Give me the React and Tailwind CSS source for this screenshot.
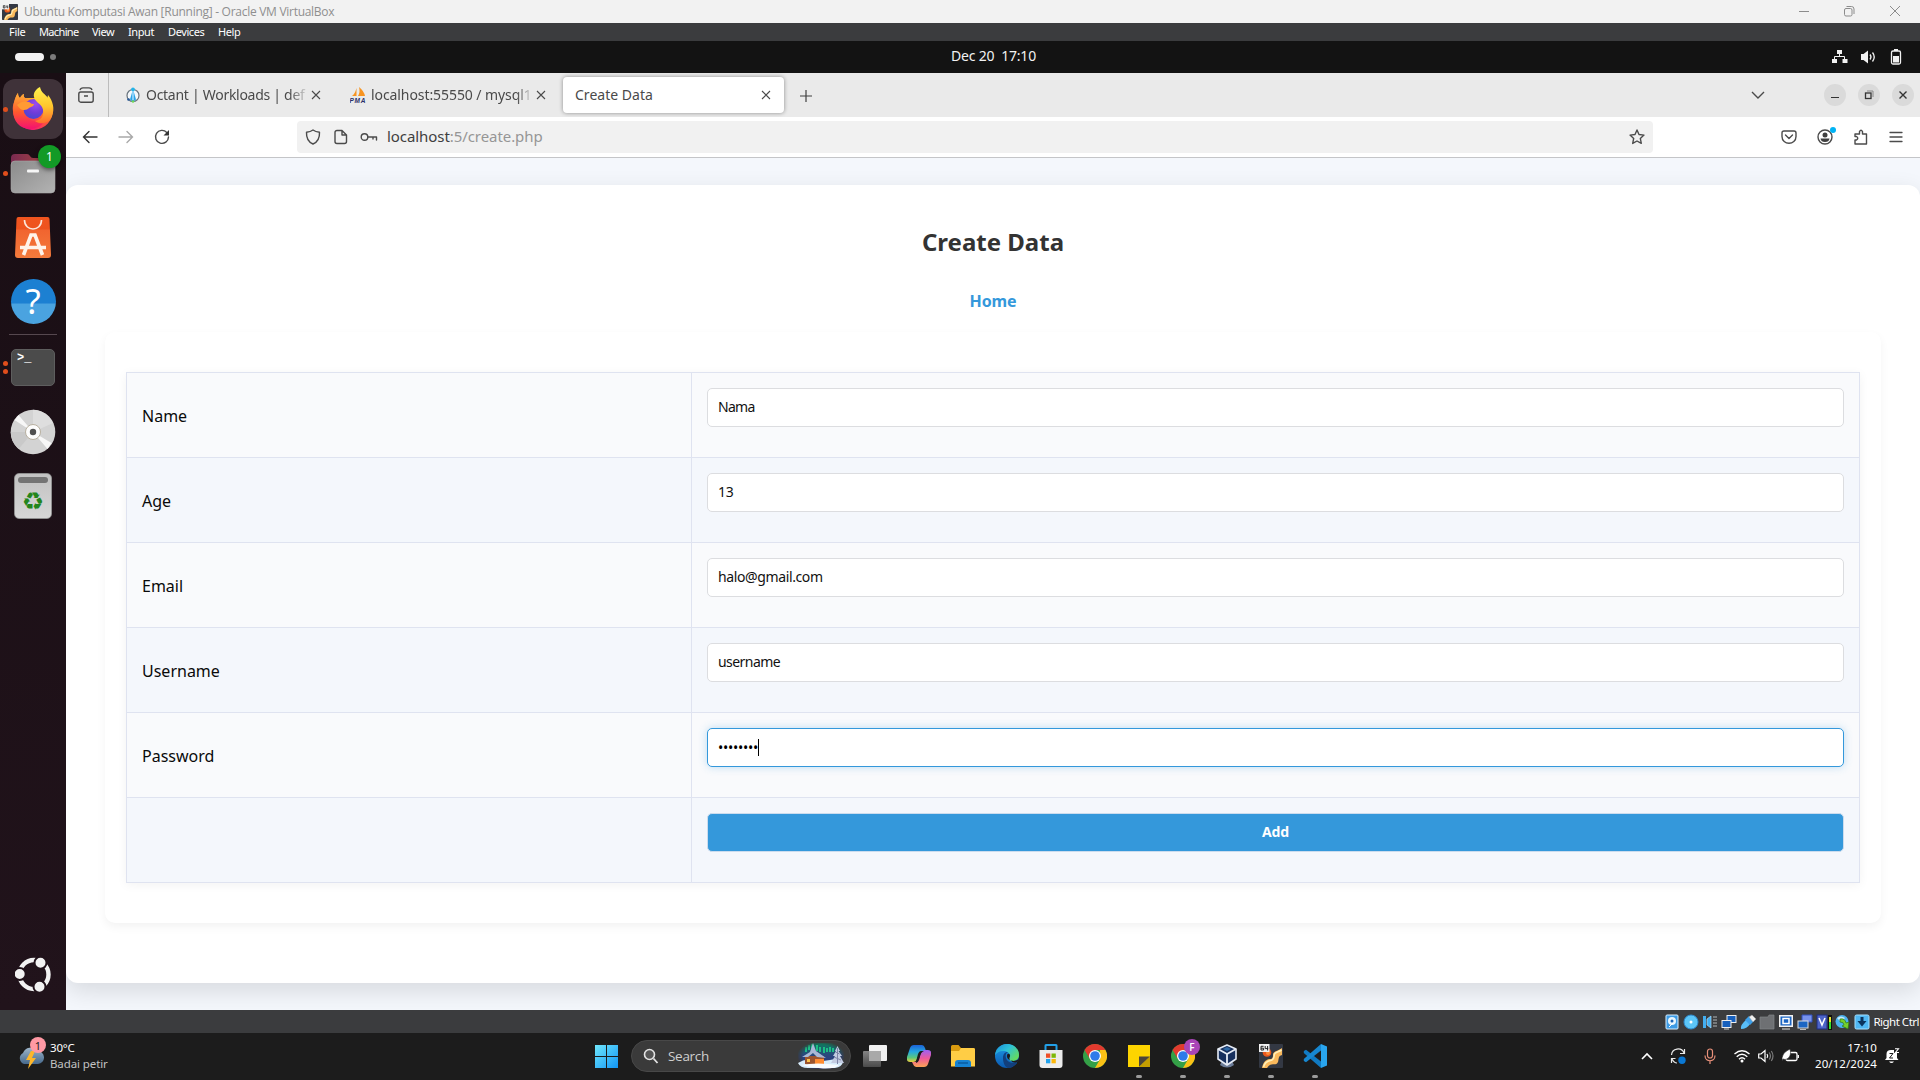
import React from "react";

const rows = [
  { label: "Name", value: "Nama", spacing: "tracking-[-0.7px]" },
  { label: "Age", value: "13", spacing: "tracking-[-0.3px]" },
  { label: "Email", value: "halo@gmail.com", spacing: "tracking-[-0.38px]" },
  { label: "Username", value: "username", spacing: "tracking-[-0.55px]" },
];

function Svg({ w = 16, h, box, children, className = "", ...rest }) {
  const hh = h || w;
  return (
    <svg width={w} height={hh} viewBox={box || `0 0 ${w} ${hh}`} fill="none" className={`block shrink-0 ${className}`} {...rest}>
      {children}
    </svg>
  );
}

function C64({ size = 24 }) {
  return (
    <Svg w={size} box="0 0 24 24">
      <rect width="24" height="24" rx="1" fill="#333843" />
      <path d="M3 24c1-5 3-8 7-9 4 0 4-1 4-5 1-3 5-3 9-6v7c-4 1-3 4-4 7-2 4-5 1-8 3-2 1-2 2-3 3z" fill="#f9b95c" />
      <path d="M4.500 23c1-4 4-6 7-6.500 4-.5 3-3 4-6.500 1-2 4-2 7-4" stroke="#fff0b8" strokeWidth="1.600" />
      <circle cx="8" cy="8.500" r="4.300" fill="#e9581d" />
      <circle cx="9" cy="9" r="2" fill="#ff8d3a" />
      <rect width="10.500" height="8" fill="#f1f1f1" />
      <path d="M4.600 2.300H2v3.700h2.600V4.200H2M6.200 2v2.600h3M8.600 2v4.500" stroke="#222" strokeWidth="1" />
    </Svg>
  );
}

function TitleBar() {
  return (
    <header className="flex h-[23px] items-center bg-[#f2f2f2] pl-[2px]">
      <C64 size={16} />
      <span className="ml-[6px] whitespace-pre font-['Open_Sans'] text-[12px] leading-[23px] tracking-[-0.28px] text-[#8f8f8f]">
        Ubuntu Komputasi Awan [Running] - Oracle VM VirtualBox
      </span>
      <div className="ml-auto flex items-center pb-[2px] pr-[19px] text-[#8c8c8c]">
        <Svg w={12}><path d="M1 6.500h10" stroke="currentColor" /></Svg>
        <Svg w={12} className="ml-[33px]">
          <rect x="1.500" y="3.500" width="7.500" height="7.500" rx="1.500" stroke="currentColor" />
          <path d="M3.500 1.500h5a2.500 2.500 0 0 1 2.500 2.500v5" stroke="currentColor" />
        </Svg>
        <Svg w={12} className="ml-[34px]"><path d="M1 1l10 10M11 1L1 11" stroke="currentColor" /></Svg>
      </div>
    </header>
  );
}

function MenuBar() {
  return (
    <nav className="flex h-[18px] items-center bg-[#3b3c3e] pl-[9px] font-['Noto_Sans'] text-[11px] leading-[18px] text-white">
      <span className="w-[30px] tracking-[-0.3px]">File</span>
      <span className="w-[53px] tracking-[-0.65px]">Machine</span>
      <span className="w-[36px] tracking-[-0.5px]">View</span>
      <span className="w-[40px] tracking-[-0.4px]">Input</span>
      <span className="w-[50px] tracking-[-0.4px]">Devices</span>
      <span className="tracking-[-0.4px]">Help</span>
    </nav>
  );
}

function GnomeBar() {
  return (
    <div className="grid h-[32px] grid-cols-3 items-center bg-[#131313] text-[#f2f2f2]">
      <div className="flex items-center gap-[6px] pl-[15px]">
        <span className="h-[8px] w-[29px] rounded-full bg-[#f2f2f2]" />
        <span className="size-[6px] rounded-full bg-[#7c7c7c]" />
      </div>
      <div className="whitespace-pre pb-[2px] pl-[67px] text-center font-['Noto_Sans'] text-[14px] leading-[30px] tracking-[-0.2px]">
        <span>Dec 20  17:10</span>
      </div>
      <div className="flex items-center justify-end gap-[13px] pr-[18px]">
        <Svg w={16}>
          <path d="M5 1h5v4H5zM0 10h5v4H0zM10.500 10h5v4h-5z" fill="currentColor" />
          <path d="M7.500 5v3M2.500 10V7.500h10V10" stroke="currentColor" />
        </Svg>
        <Svg w={16}>
          <path d="M0 5h2.500L7 1.500v13L2.500 11H0z" fill="currentColor" />
          <path d="M9 5.500q2 2.500 0 5M11.500 3.500q3.500 4.500 0 9" stroke="currentColor" strokeWidth="1.300" />
        </Svg>
        <Svg w={12} h={16}>
          <path d="M4 0h4v2H4z" fill="currentColor" />
          <rect x="1.500" y="2" width="9" height="13" rx="1.500" stroke="currentColor" strokeWidth="1.300" />
          <path d="M3 7h6v6.500H3z" fill="currentColor" />
        </Svg>
      </div>
    </div>
  );
}

function FirefoxLogo() {
  return (
    <Svg w={44} box="0 0 44 44">
      <defs>
        <linearGradient id="ffBody" x1="34" y1="4" x2="12" y2="42" gradientUnits="userSpaceOnUse">
          <stop stopColor="#fff44f" /><stop offset=".3" stopColor="#ffb52a" /><stop offset=".6" stopColor="#ff5a36" /><stop offset="1" stopColor="#f0107c" />
        </linearGradient>
        <linearGradient id="ffLeft" x1="0" y1="10" x2="0" y2="42" gradientUnits="userSpaceOnUse">
          <stop stopColor="#ffa436" /><stop offset=".5" stopColor="#ff5a2d" /><stop offset="1" stopColor="#f5156c" />
        </linearGradient>
        <linearGradient id="ffTail" x1="30" y1="0" x2="32" y2="38" gradientUnits="userSpaceOnUse">
          <stop stopColor="#fff44f" /><stop offset=".55" stopColor="#ffc52c" /><stop offset="1" stopColor="#ff6a2c" />
        </linearGradient>
        <radialGradient id="ffGlobe" cx=".6" cy=".25" r=".9">
          <stop stopColor="#9b4cf0" /><stop offset=".5" stopColor="#6f3cd8" /><stop offset="1" stopColor="#3a4bd0" />
        </radialGradient>
      </defs>
      <path d="M4 13c1-3 2-5 3-6 0 3 1 4 2 5 1-2 3-4 4-4-1 2 0 3 1 4h10l4-9c3 5 13 8 14 20a20 20 0 1 1-40 2c-1-5 1-8 2-12z" fill="url(#ffBody)" />
      <path d="M4 13c1-3 2-5 3-6 0 3 1 4 2 5 1-2 3-4 4-4-1 3 1 5 5 6l-3 14c2 8 14 10 20 4-2 7-9 11-16 11C6 43-2 30 4 13z" fill="url(#ffLeft)" />
      <circle cx="22.500" cy="23" r="10" fill="url(#ffGlobe)" />
      <path d="M29 1c1 5 5 8 8 12-1-2 0-3 0-4 5 6 7 14 4 21-3 8-12 9-17 5 8-1 10-8 7-14-2-4-7-5-8-10-1-4 2-8 6-10z" fill="url(#ffTail)" />
      <path d="M6 19c4-4 8-4 12-3 2 1 2 2 5 2 0 2-3 3-5 4-1 1-3 2-5 2-3 0-4-1-7-5z" fill="#ff9a33" />
    </Svg>
  );
}

function DockItem({ dots = 0, className = "", children }) {
  return (
    <div className={`relative flex w-full shrink-0 items-center justify-center ${className}`}>
      {dots > 0 && (
        <span className="absolute left-[3px] z-10 flex flex-col gap-[3px]">
          {Array.from({ length: dots }, (_, i) => (
            <i key={i} className="size-[5px] rounded-full bg-[#e04e1c]" />
          ))}
        </span>
      )}
      {children}
    </div>
  );
}

function Dock() {
  return (
    <aside className="flex w-[66px] shrink-0 flex-col bg-linear-to-b from-[#190e14] to-[#21131b] pt-[6px]">
      <DockItem dots={1} className="h-[60px]">
        <span className="flex size-[60px] items-center justify-center rounded-[12px] bg-[#3f3239] pb-[2px]">
          <FirefoxLogo />
        </span>
      </DockItem>

      <DockItem dots={1} className="mt-[4px] h-[60px]">
        <Svg w={46} h={42}>
          <defs>
            <linearGradient id="folderFront" x1="0" y1="0" x2="1" y2="1"><stop stopColor="#8b8b8b" /><stop offset="1" stopColor="#b3b3b3" /></linearGradient>
            <linearGradient id="folderBack" x1="0" y1="0" x2="1" y2="0"><stop stopColor="#7a2a50" /><stop offset="1" stopColor="#b04a3e" /></linearGradient>
          </defs>
          <path d="M1 6a4 4 0 0 1 4-4h12q2 0 3 2t3 2h22v14H1z" fill="url(#folderBack)" />
          <rect x="1" y="9" width="44" height="32" rx="4" fill="url(#folderFront)" stroke="#a9a9a9" strokeWidth=".6" />
          <rect x="17" y="17.500" width="12" height="3" rx="1" fill="#f6f6f6" />
        </Svg>
        <span className="absolute left-[38px] top-[2px] flex size-[23px] items-center justify-center rounded-full bg-[#129a26] font-['Noto_Sans'] text-[12px] leading-none text-white shadow-[0_2px_4px_rgba(0,0,0,0.5)]">1</span>
      </DockItem>

      <DockItem className="mt-[4px] h-[60px]">
        <Svg w={38} h={43}>
          <defs><linearGradient id="bag" x1="0" y1="0" x2="0" y2="1"><stop stopColor="#f0551f" /><stop offset=".3" stopColor="#ee531e" /><stop offset=".31" stopColor="#f1642f" /><stop offset="1" stopColor="#f47b3c" /></linearGradient></defs>
          <path d="M4.500 1h29q2 0 2 2l1.500 36q0 3-3 3H4q-3 0-3-3L2.500 3q0-2 2-2z" fill="url(#bag)" />
          <path d="M10.500 4c0 12 17 12 17 0" stroke="#fbe7dc" strokeWidth="1.600" />
          <path d="M9.500 39l7.500-20h4l7.500 20M6 31.500h26" stroke="#fff3ea" strokeWidth="3.600" />
        </Svg>
      </DockItem>

      <DockItem className="mt-[4px] h-[60px]">
        <span className="flex size-[45px] items-center justify-center rounded-full bg-linear-to-b from-[#1c80d2] from-54% to-[#4aa3e0] to-55%">
          <span className="font-['Noto_Sans'] text-[35px] leading-[44px] text-white">?</span>
        </span>
      </DockItem>

      <div className="mx-[9px] mt-[3px] h-px shrink-0 bg-[#56484f]" />

      <DockItem dots={2} className="mt-[2px] h-[60px]">
        <span className="h-[37px] w-[44px] rounded-[5px] border border-[#5e5e5e] bg-[#4b4b4b] pl-[5px] font-['Liberation_Mono'] text-[12px] font-bold leading-[17px] text-white">&gt;_</span>
      </DockItem>

      <DockItem className="mt-[5px] h-[60px]">
        <Svg w={46}>
          <circle cx="23" cy="23" r="22.300" fill="#d3d3d3" />
          <path d="M23 23V.700A22.300 22.300 0 0 1 43 14z" fill="#dedede" />
          <path d="M23 23H.700a22.300 22.300 0 0 0 8 17z" fill="#c9c9c9" />
          <path d="M23 23L4.500 11l4-5zM23 23l18.500 11-4 6z" fill="#f7f7f7" />
          <circle cx="23" cy="23" r="7.500" fill="#fdfdfd" stroke="#b8b0a0" />
          <circle cx="23" cy="23" r="3.200" fill="#505050" />
        </Svg>
      </DockItem>

      <DockItem className="mt-[4px] h-[60px]">
        <span className="flex h-[46px] w-[38px] flex-col items-center rounded-[5px] border border-[#8f8f8f] bg-linear-to-b from-[#c2c2c2] to-[#d6d6d6] pt-[3px]">
          <i className="h-[6px] w-[30px] rounded-[3px] bg-[#747474]" />
          <span className="mt-[8px] font-['DejaVu_Sans'] text-[25px] leading-[22px] text-[#23851c]">♻</span>
        </span>
      </DockItem>

      <DockItem className="mb-[18px] mt-auto h-[36px]">
        <Svg w={36}>
          <circle cx="19" cy="18.500" r="14.500" stroke="#f2f2f2" strokeWidth="4.400" />
          {[[4.700, 18], [25.500, 6.800], [24.500, 30.800]].map(([x, y]) => (
            <circle key={x} cx={x} cy={y} r="6" fill="#f2f2f2" stroke="#20121a" strokeWidth="2" />
          ))}
        </Svg>
      </DockItem>
    </aside>
  );
}

function TabClose({ className = "" }) {
  return <Svg w={10} className={className}><path d="M1 1l8 8M9 1L1 9" stroke="#4a4a4a" strokeWidth="1.100" /></Svg>;
}

function WindowButton({ children, className = "" }) {
  return <span className={`flex size-[22px] items-center justify-center rounded-full bg-[#dadada] ${className}`}>{children}</span>;
}

function TabStrip() {
  return (
    <div className="flex h-[44px] items-center bg-[#eaeaea] pr-[6px] font-['Noto_Sans'] text-[14px] text-[#4a4a4a]">
      <div className="flex h-full w-[43px] items-center border-r border-[#bcbcbc] pl-[12px]">
        <Svg w={16}>
          <rect x=".8" y="5" width="14.400" height="10.200" rx="2" stroke="#4a4a4a" strokeWidth="1.400" />
          <path d="M2 3Q2.500.800 5 .800h6Q13.500.800 14 3M6 9h4" stroke="#4a4a4a" strokeWidth="1.300" />
        </Svg>
      </div>
      <div className="flex w-[225px] items-center pl-[16px]">
        <Svg w={16}>
          <circle cx="8" cy="8.500" r="6" fill="#f4f8fb" stroke="#68737d" strokeWidth="1.200" />
          <path d="M8 2L5 12.500 8 15l3-2.500z" fill="#2aa4e8" />
          <path d="M7.300 4h1.400v9H7.300z" fill="#b4e3ff" />
          <circle cx="8" cy="2.300" r="1.900" fill="#24b4e8" />
          <circle cx="8" cy="14.500" r="1.300" fill="#70d858" />
          <circle cx="3.500" cy="12.500" r="1.300" fill="#255a9c" />
        </Svg>
        <span className="ml-[5px] w-[163px] overflow-hidden whitespace-nowrap pb-[2px] tracking-[-0.28px] mask-r-from-88%">Octant | Workloads | def</span>
        <TabClose className="ml-[2px]" />
      </div>
      <div className="flex w-[229px] items-center pl-[16px]">
        <Svg w={16}>
          <path d="M6.500 1v8H2Q5 7 6.500 1zM9 0q5 4 6 9H8Q10.500 5 9 0z" fill="#f79421" />
          <text x="-.5" y="15.500" fontFamily="Liberation Sans" fontSize="6.500" fontWeight="bold" fontStyle="italic" textLength="16" fill="#2a3068">PMA</text>
        </Svg>
        <span className="ml-[5px] w-[162px] overflow-hidden whitespace-nowrap pb-[2px] tracking-[-0.08px] mask-r-from-90%">localhost:55550 / mysql1</span>
        <TabClose className="ml-[3px]" />
      </div>
      <div className="flex h-[36px] w-[221px] items-center justify-between rounded-[4px] bg-white pl-[12px] pr-[13px] shadow-[0_0_4px_rgba(0,0,0,0.4)]">
        <span className="pb-[2px] tracking-[0.02px]">Create Data</span>
        <TabClose />
      </div>
      <Svg w={12} className="ml-[16px] mt-px"><path d="M6 0v12M0 6h12" stroke="#3f3f3f" strokeWidth="1.200" /></Svg>
      <Svg w={14} h={10} className="ml-auto"><path d="M1 2l6 6 6-6" stroke="#4a4a4a" strokeWidth="1.400" /></Svg>
      <WindowButton className="ml-[59px]"><Svg w={8}><path d="M0 6.500h8" stroke="#333" /></Svg></WindowButton>
      <WindowButton className="ml-[12px]">
        <Svg w={10}><rect x="1.500" y="3" width="5.500" height="5.500" stroke="#333" strokeWidth="1.300" /><path d="M3 1h6v6" stroke="#888" /></Svg>
      </WindowButton>
      <WindowButton className="ml-[12px]"><Svg w={8}><path d="M.500.500l7 7M7.500.500l-7 7" stroke="#333" strokeWidth="1.400" /></Svg></WindowButton>
    </div>
  );
}

function NavBar() {
  const s = { stroke: "#4b4b4b", strokeWidth: 1.4, strokeLinejoin: "round", strokeLinecap: "round" };
  return (
    <div className="flex h-[41px] items-center border-b border-[#c4c5c8] bg-white pl-[16px] pr-[17px]">
      <Svg w={16}><path d="M15 8H1.500M7 2.500L1.500 8 7 13.500" stroke="#333" strokeWidth="1.400" strokeLinecap="round" /></Svg>
      <Svg w={16} className="ml-[20px]"><path d="M1 8h13.500M9 2.500L14.500 8 9 13.500" stroke="#a9a9a9" strokeWidth="1.400" strokeLinecap="round" /></Svg>
      <Svg w={16} className="ml-[20px]"><path d="M12.800 3.500A6.500 6.500 0 1 0 14.500 8" {...s} /><path d="M15 1v5.500H9.500z" fill="#333" /></Svg>
      <div className="ml-[127px] flex h-[32px] w-[1356px] items-center rounded-[4px] bg-[#f1f1f1] px-[8px]">
        <Svg w={16}><path d="M8 1C6 2.500 4 3 1.500 3.200 1.200 9 3.500 13 8 15c4.500-2 6.800-6 6.500-11.800C12 3 10 2.500 8 1z" {...s} /></Svg>
        <Svg w={16} className="ml-[12px]"><path d="M4 1.500h5l4.500 4.500v6.500a2 2 0 0 1-2 2H4a2 2 0 0 1-2-2v-9a2 2 0 0 1 2-2zM9 1.500V6h4.500" {...s} /></Svg>
        <Svg w={18} h={16} className="ml-[11px]"><circle cx="4.500" cy="8" r="3.300" {...s} /><path d="M8 8h8.500v3M13 8v2" {...s} /></Svg>
        <span className="ml-[9px] whitespace-pre pb-[2px] font-['Noto_Sans'] text-[15px] leading-[30px] tracking-[-0.07px] text-[#3f3f3f]">localhost<span className="text-[#969696]">:5/create.php</span></span>
        <Svg w={16} className="ml-auto"><path d="M8 1l2 4.500 5 .6-3.700 3.300 1 5L8 12l-4.300 2.400 1-5L1 6.100l5-.6z" {...s} /></Svg>
      </div>
      <Svg w={16} className="ml-auto"><path d="M3 2h10q2 0 2 2v3.500c0 9-14 9-14 0V4q0-2 2-2zM4.500 6L8 9.500 11.500 6" {...s} /></Svg>
      <span className="relative ml-[20px]">
        <Svg w={16}>
          <circle cx="8" cy="8" r="7" {...s} /><circle cx="8" cy="6" r="2.500" fill="#3f3f3f" /><path d="M3.500 9.500h9Q12 13 8 13t-4.500-3.500z" fill="#3f3f3f" />
        </Svg>
        <i className="absolute -right-[3px] -top-[2px] size-[6px] rounded-full bg-[#00b3f4]" />
      </span>
      <Svg w={16} className="ml-[20px]"><path d="M2 15h11.500V5H9.500V2.500q-1.500-2.500-3 0V5H2v2.500h1.500q2.500 1.700 0 3.500H2z" {...s} /></Svg>
      <Svg w={14} className="ml-[20px]"><path d="M1 2.500h12M1 7h12M1 11.500h12" {...s} strokeWidth="1.300" /></Svg>
    </div>
  );
}

function FormRow({ label, odd, children }) {
  return (
    <div className={`grid h-[85px] grid-cols-[565px_1fr] border-b border-[#dfe3f0] ${odd ? "bg-[#f9fafc]" : "bg-[#f4f7fc]"}`}>
      <div className="flex items-center border-r border-[#dfe3f0] pl-[15px] pt-[2px] text-[16px] text-[#0a0a0a]">{label}</div>
      <div className="px-[15px] pt-[15px]">{children}</div>
    </div>
  );
}

function WebPage() {
  return (
    <main className="flex-1 overflow-hidden bg-[#f4f7fc] pt-[27px] font-['Noto_Sans']">
      <section className="flex h-[798px] flex-col items-center rounded-[12px] bg-white shadow-[0_8px_24px_rgba(0,0,0,0.12)]">
        <h1 className="mt-[41px] text-[24px] font-bold leading-[32px] text-[#333]">Create Data</h1>
        <a className="mt-[31px] text-[16px] font-bold leading-[24px] tracking-[-0.1px] text-[#3498db]">Home</a>
        <form className="mt-[19px] h-[591px] w-[1776px] rounded-[10px] bg-white px-[21px] pt-[40px] shadow-[0_4px_10px_rgba(0,0,0,0.05)]">
          <div className="w-[1734px] border-x border-t border-[#dfe3f0] shadow-[0_2px_10px_rgba(0,0,0,0.05)]">
            {rows.map((r, i) => (
              <FormRow key={r.label} label={r.label} odd={i % 2 === 0}>
                <input readOnly value={r.value} className={`h-[39px] w-full rounded-[5px] border border-[#dcdde0] bg-white px-[10px] pb-[2px] text-[14px] text-[#111] outline-none ${r.spacing}`} />
              </FormRow>
            ))}
            <FormRow label="Password" odd>
              <div className="flex h-[39px] items-center rounded-[5px] border border-[#3498db] bg-white pl-[10px] shadow-[0_0_8px_rgba(52,152,219,0.3)]">
                <span className="text-[14px] leading-[36px] tracking-[-0.25px] text-black">••••••••</span>
                <i className="h-[17px] w-px bg-black" />
              </div>
            </FormRow>
            <FormRow label="" odd={false}>
              <button type="button" className="h-[39px] w-full rounded-[5px] border border-[#cbdcee] bg-[#3498db] pb-[2px] text-[14px] font-bold tracking-[-0.2px] text-white">Add</button>
            </FormRow>
          </div>
        </form>
      </section>
    </main>
  );
}

function StatusBar() {
  return (
    <div className="flex h-[23px] shrink-0 items-center justify-end gap-[3px] bg-[#3b3c3e] pr-px">
      <Svg w={16}><rect x="2" y="1" width="12" height="14" rx="1" fill="#3d9be5" stroke="#d7eeff" /><circle cx="8" cy="7" r="4" fill="#e6f6ff" /><circle cx="8" cy="7" r="1.500" fill="#1b65b8" /><path d="M5 13l4-4" stroke="#fff" /></Svg>
      <Svg w={16}><circle cx="8" cy="8" r="7" fill="#5cc6f8" stroke="#2e8bd0" /><circle cx="8" cy="8" r="1.500" fill="#fff" /></Svg>
      <Svg w={16}><path d="M1 2h3v12H1z" fill="#43aef0" /><path d="M5 5l4-3v12l-4-3z" fill="#43aef0" stroke="#a7ddff" strokeWidth=".7" /><path d="M11 3h4M11 6h4M11 9h4M11 12h4" stroke="#8b8d90" strokeWidth="1.400" /></Svg>
      <Svg w={16}><rect x="6" y="1.500" width="9" height="7" fill="#1760bd" stroke="#eee" /><rect x="1" y="6.500" width="9" height="7" fill="#1760bd" stroke="#eee" /><path d="M3 15h5" stroke="#ccc" /></Svg>
      <Svg w={16}><path d="M1 15q-1-4 5-9l4 4q-3 5-9 5z" fill="#59bdf8" /><path d="M5 6l4-4 5 5-4 4z" fill="#3d9fe9" /><path d="M9 3l3-2 4 4-3 3z" fill="#eee" stroke="#999" strokeWidth=".5" /></Svg>
      <Svg w={16}><path d="M1 3h8l1-2h5v14H1z" fill="#6e7073" stroke="#828487" strokeWidth=".7" /></Svg>
      <Svg w={16}><rect x="1" y="1" width="14" height="12" fill="#f2f2f2" /><rect x="2.500" y="2.500" width="11" height="9" fill="#1b65c3" /><rect x="5" y="4.500" width="6" height="5" stroke="#fff" strokeWidth="1.500" /><path d="M4 15h8" stroke="#ddd" /></Svg>
      <Svg w={16}><path d="M5 1h10v7H5z" fill="#7792ec" stroke="#3350c0" /><rect x="1" y="7" width="10" height="7" fill="#1b65c3" stroke="#ddd" /><path d="M3 15.500h6" stroke="#bbb" /></Svg>
      <Svg w={16}><rect x="1" y="1" width="10" height="14" fill="#4d64c8" stroke="#1e2d80" /><path d="M3 4l3 7 3-7" stroke="#fff" strokeWidth="1.500" /><rect x="12" y="1" width="4" height="15" fill="#111" /><path d="M13 6h2v9h-2z" fill="#33e02c" /><path d="M13 3h2v5h-2z" fill="#e8e52c" /></Svg>
      <Svg w={16}><circle cx="7" cy="7.500" r="6.500" fill="#4bb2ef" /><path d="M2 4q4-3 8 0L6 8z" fill="#c6ecff" /><path d="M5 5q5-1 6 4l3-1-1 7-6-3 2-1Q9 8 5 8z" fill="#74cf2c" stroke="#2c7a14" strokeWidth=".7" /></Svg>
      <Svg w={16}><rect x="1" y="1" width="14" height="14" rx="1.500" fill="#4fb7f3" stroke="#a6e0ff" /><path d="M8 3v5" stroke="#0a335c" strokeWidth="3" /><path d="M3.500 7h9L8 12.500z" fill="#0a335c" /></Svg>
      <span className="font-['Noto_Sans'] text-[11.5px] leading-[22px] tracking-[-0.5px] text-white">Right Ctrl</span>
    </div>
  );
}

function ChromeLogo() {
  return (
    <Svg w={24} box="0 0 24 24">
      <circle cx="12" cy="12" r="12" fill="#34a047" />
      <path d="M22.400 6A12 12 0 0 1 12 24l5.200-9-.2-9z" fill="#fbc116" />
      <path d="M1.600 6L7 15l5-9h10.400A12 12 0 0 0 1.600 6z" fill="#e23a2e" />
      <circle cx="12" cy="12" r="6" fill="#fff" /><circle cx="12" cy="12" r="4.800" fill="#2d7bea" />
    </Svg>
  );
}

function TaskApp({ running, children }) {
  return (
    <span className="relative flex h-[47px] w-[44px] shrink-0 items-center justify-center pb-[1px]">
      {children}
      {running && <i className="absolute bottom-[2px] left-[19px] h-[3px] w-[6px] rounded-full bg-[#9b9b9b]" />}
    </span>
  );
}

function TaskBar() {
  return (
    <footer className="flex h-[47px] shrink-0 items-center bg-[#1c1c1c] text-white">
      <div className="flex w-[580px] items-center pb-[1px] pl-[18px]">
        <span className="relative">
          <Svg w={26} h={28}>
            <defs><linearGradient id="cloud" x1="0" y1="0" x2="0" y2="1"><stop stopColor="#9db5c9" /><stop offset="1" stopColor="#46698c" /></linearGradient></defs>
            <path d="M6 22a6 6 0 0 1-1-11 8 8 0 0 1 14-2 6.500 6.500 0 0 1 1 13z" fill="url(#cloud)" />
            <path d="M13 9l-5 9h4l-2 9 8-11h-4l3-7z" fill="#fdb62b" />
          </Svg>
          <span className="absolute -top-[5px] left-[12px] flex size-[16px] items-center justify-center rounded-full bg-[#ff99a4] font-['Noto_Sans'] text-[11px] leading-none text-[#222]">1</span>
        </span>
        <div className="ml-[6px] font-['Noto_Sans'] text-[11.500px] leading-[16px]">
          <div className="tracking-[-0.2px] text-white">30°C</div>
          <div className="tracking-[-0.1px] text-[#c2c2c2]">Badai petir</div>
        </div>
      </div>
      <div className="flex w-[51px] pb-[1px] pl-[15px]">
        <Svg w={23}>
          <defs><linearGradient id="win" x1="0" y1="0" x2="1" y2="1"><stop stopColor="#6fe6fb" /><stop offset="1" stopColor="#1195f5" /></linearGradient></defs>
          <path d="M0 0h11v11H0zM12 0h11v11H12zM0 12h11v11H0zM12 12h11v11H12z" fill="url(#win)" />
        </Svg>
      </div>
      <div className="mb-[1px] flex h-[32px] w-[220px] items-center rounded-full border border-[#484848] bg-[#3a3a3a] pl-[11px] pr-[6px]">
        <Svg w={16}><circle cx="6.500" cy="6.500" r="5" fill="#555" stroke="#e3e3e3" strokeWidth="1.600" /><path d="M10.500 10.500L14.500 15" stroke="#e3e3e3" strokeWidth="1.800" /></Svg>
        <span className="ml-[9px] font-['Open_Sans'] text-[13.5px] leading-[28px] tracking-[-0.3px] text-[#cfcfcf]">Search</span>
        <Svg w={46} h={26} className="ml-auto">
          <defs>
            <linearGradient id="aurora" x1="0" y1="0" x2="0" y2="1"><stop stopColor="#0c7c5c" /><stop offset=".5" stopColor="#2a4480" /><stop offset="1" stopColor="#31356b" /></linearGradient>
            <radialGradient id="auroraFade"><stop offset=".75" stopColor="#fff" /><stop offset="1" stopColor="#fff" stopOpacity="0" /></radialGradient>
            <mask id="auroraMask"><ellipse cx="23" cy="13" rx="24" ry="15" fill="url(#auroraFade)" /></mask>
          </defs>
          <g mask="url(#auroraMask)">
            <path d="M0 0h46v26H0z" fill="url(#aurora)" />
            <path d="M8 4v5M11 2v5M14 1v5M19 2v6M22 4v5M26 4v6M29 5v4M32 4v5M35 5v4" stroke="#1fd48c" strokeWidth="1.600" />
          </g>
          <path d="M0 20q7-5 14-3t18 0q8-2 13 2-1 5-8 6H10Q2 25 0 20z" fill="#d7ecfb" />
          <path d="M7 13h19v8l-12 2-7-2z" fill="#9a5430" />
          <path d="M4 14l8-5 3-9 3 8 10 7-9-1-4-4-5 4z" fill="#a9b8d6" />
          <path d="M17 16h9v6h-9z" fill="#ff8c32" /><path d="M9 16h3v3H9z" fill="#ffc44b" />
          <path d="M39.500 3l2.500 5h-1.500l3.500 5h-2l4 7H33l4-7h-2l3-5h-1z" fill="#c3cce2" /><path d="M39.500 5v16M36 14l7 3M37.500 9l4 2" stroke="#7e85a8" />
          <path d="M3 22q15-3 38 0-4 4-16 3.500T3 22z" fill="#f7fbff" />
        </Svg>
      </div>
      <div className="ml-[2px] flex">
        <TaskApp>
          <Svg w={24} h={22}>
            <defs><linearGradient id="tv" x1="0" y1="0" x2="0" y2="1"><stop stopColor="#858585" /><stop offset="1" stopColor="#4b4b4b" /></linearGradient></defs>
            <rect x="6" width="18" height="16" rx="1" fill="#f1f1f1" /><rect y="6" width="18" height="16" rx="1" fill="url(#tv)" /><path d="M6 6h12v10H6z" fill="#a9a9a9" />
          </Svg>
        </TaskApp>
        <TaskApp>
          <Svg w={24} h={22}>
            <defs>
              <linearGradient id="cpA" x1="0" y1="0" x2="0" y2="1"><stop stopColor="#1c62d8" /><stop offset=".4" stopColor="#24a8e0" /><stop offset=".75" stopColor="#5cc87a" /><stop offset="1" stopColor="#f2d03c" /></linearGradient>
              <linearGradient id="cpB" x1="0" y1="0" x2="0" y2="1"><stop stopColor="#9c60f4" /><stop offset=".5" stopColor="#ee5a9a" /><stop offset="1" stopColor="#fba454" /></linearGradient>
            </defs>
            <path d="M7 0h8q2 0 3 3l1 3h-4q-2 0-3 3l-2 5q-1 3-4 3H3q-4 0-3-5L3 3q1-3 4-3z" fill="url(#cpA)" />
            <path d="M17 22H9q-2 0-3-3l-1-2h3q3 0 4-3l2-6q1-3 4-3h3q4 0 3 5l-3 9q-1 3-4 3z" fill="url(#cpB)" />
            <path d="M14 6h3q-3 1-4 5l-1 4q-1 3-3 3 0-2 1-5l1-4q1-3 3-3z" fill="#1c1c1c" />
          </Svg>
        </TaskApp>
        <TaskApp>
          <Svg w={24} h={22}>
            <path d="M0 1.500Q0 0 1.500 0h6L10 3h12.500Q24 3 24 4.500V10H0z" fill="#d99b10" />
            <path d="M0 6h8l2-3h12.500Q24 3 24 4.500v17H0z" fill="#ffcd45" />
            <path d="M4 22v-4q0-3 3-3h10q3 0 3 3v4z" fill="#1682d2" /><path d="M7 18h10" stroke="#0a5a9c" strokeWidth="1.400" />
          </Svg>
        </TaskApp>
        <TaskApp>
          <Svg w={24}>
            <defs>
              <linearGradient id="edA" x1="0" y1="0" x2="1" y2=".7"><stop stopColor="#188bdc" /><stop offset=".5" stopColor="#2ec2d8" /><stop offset="1" stopColor="#66dc5c" /></linearGradient>
              <linearGradient id="edB" x1="0" y1="0" x2="0" y2="1"><stop stopColor="#1d9be8" /><stop offset="1" stopColor="#0b59b0" /></linearGradient>
            </defs>
            <circle cx="12" cy="12" r="12" fill="url(#edB)" />
            <path d="M0 11C1 4 6 0 12 0c7 0 12 5 12 11 0 4-3 6-6 6-3 0-4-1-4-2 0-1 1-1 1-3 0-3-3-5-7-5-4 0-6 2-8 4z" fill="url(#edA)" />
            <path d="M8 14c0-4 2-6 5-6-2 1-3 3-2 6 1 4 6 6 11 4-2 4-6 6-9 6-3-1-5-5-5-10z" fill="#123f7c" />
            <path d="M12.500 10c2-1 3 1 2.500 2.500-.7 1.200-1 2 0 3.300-2 0-4-3-2.500-5.800z" fill="#1c1c1c" />
            <path d="M16 16.500q5 1.500 8-2L22.500 18q-5 1.500-6.500-1.500z" fill="#1c1c1c" />
          </Svg>
        </TaskApp>
        <TaskApp>
          <Svg w={24}>
            <path d="M6.500 7V1.500Q6.500 1 7 1h10q.5 0 .5.500V7" stroke="#22a0e8" strokeWidth="2" />
            <path d="M.500 6h23v15q0 3-3 3h-17q-3 0-3-3z" fill="#ececec" />
            <path d="M7 9.500h4.300v4.300H7z" fill="#ef4f28" /><path d="M12.500 9.500h4.300v4.300h-4.300z" fill="#7db809" /><path d="M7 15h4.300v4.300H7z" fill="#21a2ec" /><path d="M12.500 15h4.300v4.300h-4.300z" fill="#fcb70a" />
          </Svg>
        </TaskApp>
        <TaskApp><ChromeLogo /></TaskApp>
        <TaskApp running>
          <Svg w={22}><path d="M0 0h22v12L12 22H0z" fill="#fdd400" /><path d="M11 11.500h11L11 22z" fill="#4b4539" /><path d="M22 11.500V22H11z" fill="#c49e00" /></Svg>
        </TaskApp>
        <TaskApp running>
          <ChromeLogo />
          <span className="absolute left-[23px] top-[6px] flex size-[16px] items-center justify-center rounded-full bg-[#a945b8] font-['Open_Sans'] text-[10px] font-semibold leading-none">F</span>
        </TaskApp>
        <TaskApp running>
          <Svg w={20} h={24}>
            <path d="M5 17h10l2 4q-7 5-14 0z" fill="#6b7c99" />
            <path d="M10 1l9 4v10l-9 6-9-6V5z" fill="#17305e" stroke="#e5ebf5" strokeWidth="1.600" strokeLinejoin="round" />
            <path d="M1 5l9 5 9-5M10 10v11" stroke="#e5ebf5" strokeWidth="1.800" /><path d="M6 5l4-2 4 2-4 2z" fill="#2e68a4" />
          </Svg>
        </TaskApp>
        <TaskApp running><C64 /></TaskApp>
        <TaskApp running>
          <Svg w={24}>
            <path d="M.800 7L3 5.800 18 17.500V24L.800 9z" fill="#117ac2" />
            <path d="M18 0L.800 15v2L3 18.200 18 6.500z" fill="#1787d0" />
            <path d="M18 0l6 2.500v19L18 24z" fill="#29a5ee" />
          </Svg>
        </TaskApp>
      </div>
      <div className="ml-auto flex items-center pb-[1px]">
        <Svg w={12} h={8} className="mr-[17px]"><path d="M1 7l5-5 5 5" stroke="#fff" strokeWidth="1.600" /></Svg>
        <Svg w={16}>
          <path d="M1.500 7A6.500 6.500 0 0 1 14 5M14.500 1v4.500H10M1.500 15v-4.500h4M2 11q2 4 5 4" stroke="#e8e8e8" strokeWidth="1.200" />
          <circle cx="12" cy="12.300" r="3.700" fill="#0a78d4" />
        </Svg>
        <Svg w={16} className="ml-[16px]"><rect x="5.500" y="1" width="5" height="9" rx="2.500" stroke="#e8907a" strokeWidth="1.200" /><path d="M3 7.500c0 7 10 7 10 0M8 13v3" stroke="#e8907a" strokeWidth="1.200" /></Svg>
        <Svg w={16} className="ml-[16px]"><path d="M.500 6q7.500-6.500 15 0M2.700 8.700q5.300-5 10.600 0M5 11.200q3-3 6 0" stroke="#fff" strokeWidth="1.400" /><circle cx="8" cy="13" r="1.500" fill="#fff" /></Svg>
        <Svg w={16} className="ml-[8px]"><path d="M.700 6H3l4-3.500v11L3 10H.700z" stroke="#fff" strokeWidth="1.200" /><path d="M9 6q1.500 2 0 4" stroke="#fff" strokeWidth="1.200" /><path d="M11.200 4.500q2.500 3.500 0 7M13.300 3q3.400 5 0 10" stroke="#7a7a7a" strokeWidth="1.200" /></Svg>
        <Svg w={17} h={16} className="ml-[8px]"><rect x="4" y="4.500" width="11" height="8" rx="1.500" stroke="#fff" strokeWidth="1.300" /><path d="M16.300 7v3" stroke="#fff" strokeWidth="1.300" /><path d="M0 13Q-1 5 8 1q2 7-3 10-2 1-4 0z" fill="#fff" stroke="#1c1c1c" strokeWidth=".6" /></Svg>
        <div className="w-[78px] text-right font-['Noto_Sans'] text-[11.5px] leading-[16px] tracking-[0.08px]">
          <div>17:10</div>
          <div>20/12/2024</div>
        </div>
        <Svg w={15} h={16} className="ml-[8px] mr-[20px]">
          <path d="M0 12l1.500-2V6q0-4 4.500-4h3v3h3v5l1.500 2zM4 13.500h5Q6.500 16.500 4 13.500z" fill="#fff" />
          <path d="M4.500 5.500h3.500l-3.500 4.500H8" stroke="#1c1c1c" /><path d="M10 .800h3.500l-3 3.700H14" stroke="#fff" strokeWidth="1.100" />
        </Svg>
      </div>
    </footer>
  );
}

export default function App() {
  return (
    <div className="flex h-[1080px] w-[1920px] flex-col overflow-hidden">
      <TitleBar />
      <MenuBar />
      <GnomeBar />
      <div className="flex h-[937px] shrink-0">
        <Dock />
        <div className="flex min-w-0 flex-1 flex-col">
          <TabStrip />
          <NavBar />
          <WebPage />
        </div>
      </div>
      <StatusBar />
      <TaskBar />
    </div>
  );
}
